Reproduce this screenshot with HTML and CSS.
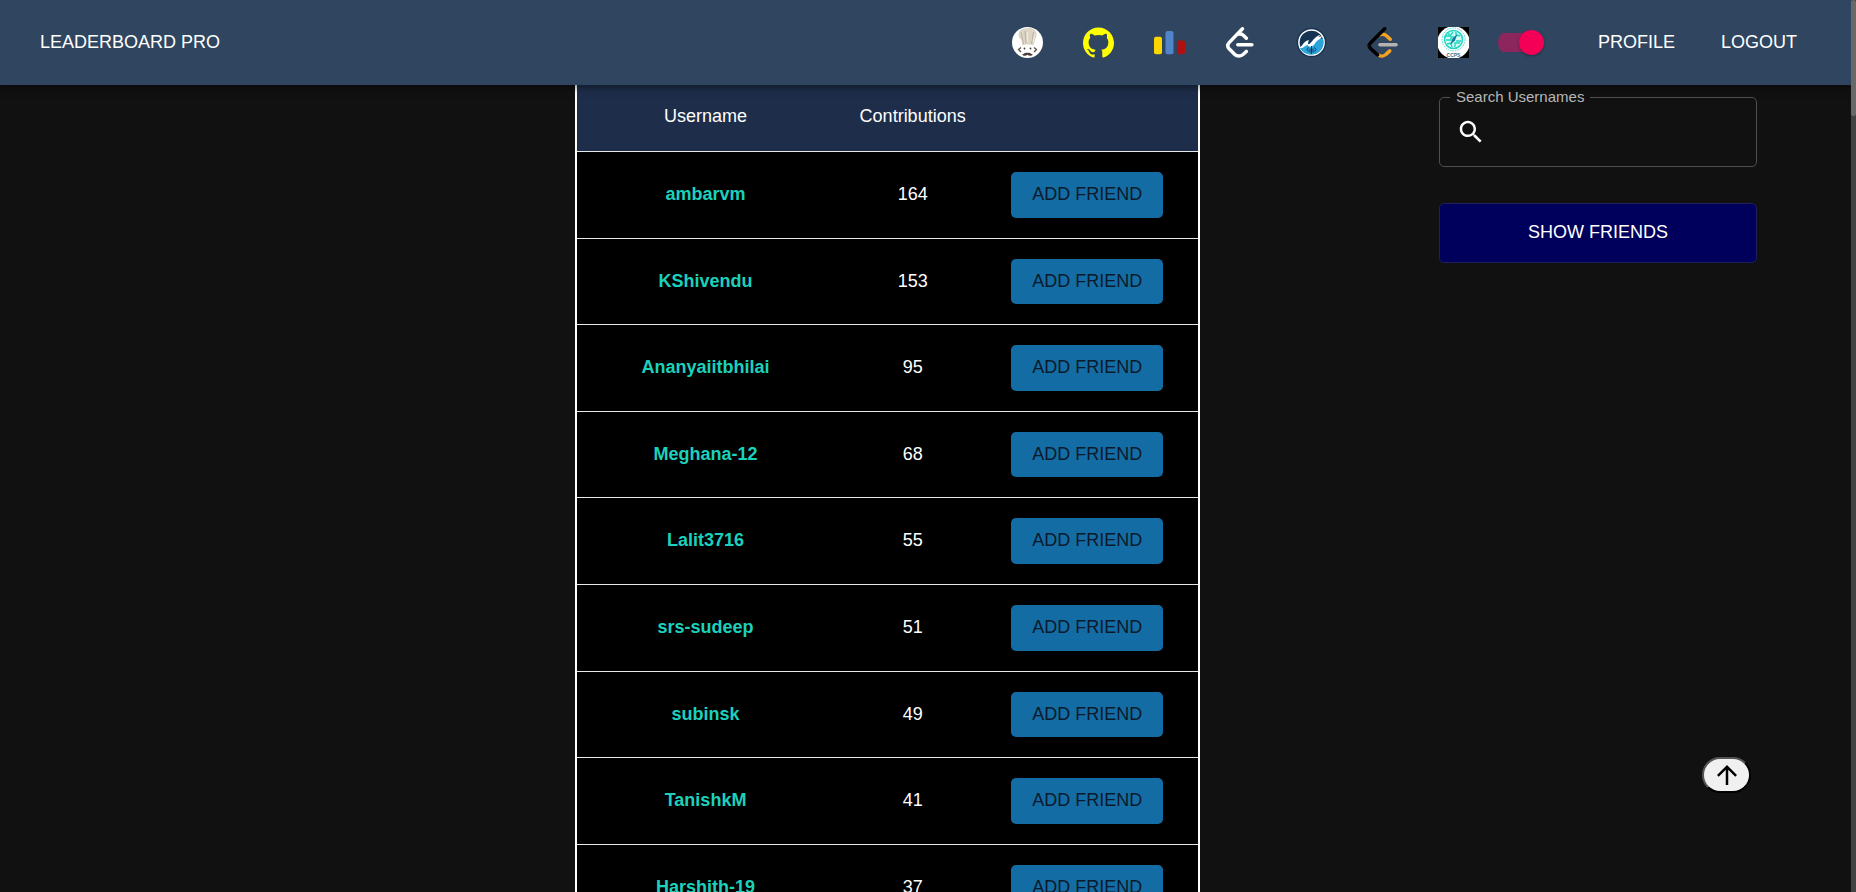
FILE: index.html
```html
<!DOCTYPE html>
<html lang="en">
<head>
<meta charset="utf-8">
<title>Leaderboard Pro</title>
<link rel="stylesheet" href="styles.css">
</head>
<body>
<div class="shell">
  <header class="navbar">
    <a class="nav-link" href="#">LEADERBOARD PRO</a>
    <nav class="nav-right">
      <div class="platforms">
        <a href="#codechef" aria-label="CodeChef">
          <svg class="icon" viewBox="0 0 31 31">
            <circle cx="15.500" cy="15.500" r="15.500" fill="#fff"/>
            <path d="M10.500 18.500 9.500 13C6 11 5.500 6 8 3.500 10 1.500 13 2 14 1.500c3-1 6-.5 8 1 3 2 3.500 6 1.500 9L21.500 18.500c-3-1.300-8-1.300-11 0z" fill="#ddd6c6"/>
            <path d="M11.500 17 9 5M14 16 13 4M19.500 17l2-12" stroke="#bdb29c" stroke-width="1" fill="none"/>
            <path d="M15.500 15V5M21 15l2-8" stroke="#f2eee4" stroke-width="1" fill="none"/>
            <path d="M9 20.500l-2.500 2L9 25M22 20.500l2.500 2L22 25" stroke="#59504a" stroke-width="1.300" fill="none"/>
            <circle cx="12.500" cy="21.500" r=".9" fill="#463c38"/><circle cx="18.500" cy="21.500" r=".9" fill="#463c38"/>
            <path d="M10 27.500c1.500.2 3-2.500 5.500-1.500 2.500-1 4 1.700 5.500 1.500-1.500 1.800-4 1.500-5.500.3-1.500 1.200-4 1.500-5.500-.3z" fill="#463c38"/>
          </svg>
        </a>
        <a href="#github" aria-label="GitHub">
          <svg class="icon" viewBox="0 0 24 24">
            <path fill="#ff0" d="M12 .297c-6.630 0-12 5.373-12 12 0 5.303 3.438 9.800 8.205 11.385.6.113.82-.258.82-.577 0-.285-.01-1.040-.015-2.040-3.338.724-4.042-1.610-4.042-1.610C4.422 18.070 3.633 17.700 3.633 17.700c-1.087-.744.084-.729.084-.729 1.205.084 1.838 1.236 1.838 1.236 1.070 1.835 2.809 1.305 3.495.998.108-.776.417-1.305.76-1.605-2.665-.3-5.466-1.332-5.466-5.930 0-1.310.465-2.380 1.235-3.220-.135-.303-.54-1.523.105-3.176 0 0 1.005-.322 3.300 1.230.96-.267 1.980-.399 3-.405 1.020.006 2.040.138 3 .405 2.280-1.552 3.285-1.230 3.285-1.230.645 1.653.24 2.873.12 3.176.765.840 1.230 1.910 1.230 3.220 0 4.610-2.805 5.625-5.475 5.920.42.360.81 1.096.81 2.220 0 1.606-.015 2.896-.015 3.286 0 .315.210.690.825.570C20.565 22.092 24 17.592 24 12.297c0-6.627-5.373-12-12-12"/>
          </svg>
        </a>
        <a href="#codeforces" aria-label="Codeforces">
          <svg class="icon" viewBox="0 0 24 24">
            <rect x="0" y="7.500" width="6.200" height="13.500" rx="1.500" fill="#ffd500"/>
            <rect x="8.900" y="3" width="6.200" height="18" rx="1.500" fill="#5185c9"/>
            <rect x="17.800" y="10.500" width="6.200" height="10.500" rx="1.500" fill="#b01010"/>
          </svg>
        </a>
        <a href="#leetcode-contests" aria-label="LeetCode contests">
          <svg class="icon" viewBox="0 0 24 24" fill="none" stroke="#fff" stroke-width="2.700" stroke-linecap="round" stroke-linejoin="round">
            <path d="M13.500 1.400 3.200 12.100c-1.300 1.400-1.300 3.300 0 4.700l4.200 4.300c1.700 1.700 4.900 1.900 6.700.1l2.400-2.300M9.500 5.700c1.800-.7 3.400-.5 4.900.9l2.100 2.100M9.900 13.700h10.900"/>
          </svg>
        </a>
        <a href="#openlake" aria-label="OpenLake">
          <svg class="icon" viewBox="0 0 31 31">
            <circle cx="15.500" cy="15.500" r="14.800" fill="#173454"/>
            <circle cx="15.500" cy="15.500" r="12.600" fill="#163451" stroke="#fff" stroke-width="1.500"/>
            <path d="M4 21c3-2 5-6 9-7-2 3 0 5 2 3 3-4 6-6 12-5.500C29 18 25 27.500 15.500 27.500 10 27.500 6 25 4 21z" fill="#29a5dc"/>
            <path d="M3.500 21c3-2 5-8 9.500-7.700-2 3-1 5.200 1 3.200C18 12 20 9 25 7.500L22.500 10l4-1-2.500 3 3.500-.5c-5 .2-7 2.500-9 5.500-2 3-6 4-7 .5-2 1-4 4-8 3.500z" fill="#fff"/>
            <path d="M15.500 19v8M12.500 20.500l-1.500 2 1.500 2M18.500 20.500l1.500 2-1.500 2M14 21.500v4M17 21.500v4" fill="none" stroke="#173454" stroke-width="1"/>
          </svg>
        </a>
        <a href="#leetcode" aria-label="LeetCode">
          <svg class="icon" viewBox="0 0 24 24" fill="none" stroke-width="2.700" stroke-linecap="round" stroke-linejoin="round">
            <path stroke="#f5a121" d="M10.300 5.900c1.800-.7 3.400-.4 4.900 1l2.800 2.600"/>
            <path stroke="#f5a121" d="M8.700 21.600c1.800 1.300 4.600 1 6.200-.6l2.700-2.500"/>
            <path stroke="#b3b3b3" d="M10 13.700h12.500"/>
            <path stroke="#000" d="M13.700 1.400 2.700 12.300c-1.300 1.300-1.300 2.900 0 4.300l5.500 5"/>
          </svg>
        </a>
        <a href="#ccps" aria-label="CCPS">
          <svg class="icon" viewBox="0 0 31 31">
            <path fill="#000" d="M0 0h31v31H0z"/>
            <circle cx="15.500" cy="15.500" r="16.300" fill="#fff"/>
            <circle cx="15.500" cy="12.500" r="11.500" fill="none" stroke="#4bd5ce" stroke-width="1" stroke-dasharray="1.500 1"/>
            <circle cx="15.500" cy="12.500" r="9" fill="#d5faf3" stroke="#20d8c4" stroke-width="1.500"/>
            <path d="M8 9h4l3-4M8 13h5v-3h4M9 17l4-1 1 4M17 20v-4h5M18 14h5M18 5v3l4 1M11 6v3" fill="none" stroke="#20d8c4" stroke-width="1.400"/>
            <path d="M19.500 7 17 13.500 12 18l2.500-6.500z" fill="#167c9d"/>
            <text x="15.500" y="30" text-anchor="middle" class="ccps-text">CCPS</text>
          </svg>
        </a>
      </div>
      <input class="switch" type="checkbox" role="switch" aria-label="Dark mode" checked>
      <div class="account">
        <a class="nav-link" href="#profile">PROFILE</a>
        <a class="nav-link" href="#logout">LOGOUT</a>
      </div>
    </nav>
  </header>

  <main class="content">
    <table class="board">
      <thead>
        <tr><th class="col-user">Username</th><th class="col-count">Contributions</th><th class="col-action"></th></tr>
      </thead>
      <tbody>
        <tr><td><a class="user" href="#">ambarvm</a></td><td>164</td><td><button class="add">ADD FRIEND</button></td></tr>
        <tr><td><a class="user" href="#">KShivendu</a></td><td>153</td><td><button class="add">ADD FRIEND</button></td></tr>
        <tr><td><a class="user" href="#">Ananyaiitbhilai</a></td><td>95</td><td><button class="add">ADD FRIEND</button></td></tr>
        <tr><td><a class="user" href="#">Meghana-12</a></td><td>68</td><td><button class="add">ADD FRIEND</button></td></tr>
        <tr><td><a class="user" href="#">Lalit3716</a></td><td>55</td><td><button class="add">ADD FRIEND</button></td></tr>
        <tr><td><a class="user" href="#">srs-sudeep</a></td><td>51</td><td><button class="add">ADD FRIEND</button></td></tr>
        <tr><td><a class="user" href="#">subinsk</a></td><td>49</td><td><button class="add">ADD FRIEND</button></td></tr>
        <tr><td><a class="user" href="#">TanishkM</a></td><td>41</td><td><button class="add">ADD FRIEND</button></td></tr>
        <tr><td><a class="user" href="#">Harshith-19</a></td><td>37</td><td><button class="add">ADD FRIEND</button></td></tr>
      </tbody>
    </table>

    <aside class="panel">
      <fieldset class="search">
        <legend><label for="search">Search Usernames</label></legend>
        <svg class="search-icon" viewBox="0 0 24 24"><path fill="#fff" d="M15.500 14h-.79l-.28-.27C15.410 12.590 16 11.110 16 9.500 16 5.910 13.090 3 9.500 3S3 5.910 3 9.500 5.910 16 9.500 16c1.610 0 3.090-.59 4.230-1.570l.27.28v.79l5 4.990L20.490 19l-4.990-5zm-6 0C7.010 14 5 11.990 5 9.500S7.010 5 9.500 5 14 7.010 14 9.500 11.990 14 9.500 14z"/></svg>
        <input id="search" type="text">
      </fieldset>
      <button class="friends">SHOW FRIENDS</button>
    </aside>
  </main>
</div>

<button class="to-top" aria-label="Back to top">
  <svg viewBox="0 0 24 24"><path d="M4 12l1.410 1.410L11 7.830V20h2V7.830l5.580 5.590L20 12l-8-8-8 8z"/></svg>
</button>
<div class="scroll-track"><div class="scroll-thumb"></div></div>
</body>
</html>
```

FILE: styles.css
```css
* {
  box-sizing: border-box;
}

body {
  margin: 0;
  padding-right: 5px;
  background: #111;
  color: #fff;
  font: 18px/1.2 "Liberation Sans", Arial, sans-serif;
}

button,
input {
  font: inherit;
}

a {
  color: inherit;
  text-decoration: none;
}

.shell {
  height: 100vh;
  display: flex;
  flex-direction: column;
  overflow: hidden;
}

/* Top bar */
.navbar {
  z-index: 1;
  flex: none;
  display: flex;
  justify-content: space-between;
  align-items: center;
  padding: 27px 54px 27px 40px;
  background: #2f4560;
  box-shadow: 0 2px 8px rgba(0, 0, 0, 0.5);
}

.nav-right,
.platforms,
.account {
  display: flex;
  align-items: center;
}

.platforms {
  gap: 40px;
}

.platforms a {
  display: flex;
}

.icon {
  width: 31px;
  height: 31px;
}

.ccps-text {
  font: bold 5px "Liberation Sans", Arial, sans-serif;
  fill: #48708c;
}

.switch {
  appearance: none;
  display: flex;
  align-items: center;
  justify-content: flex-end;
  width: 46px;
  height: 25px;
  margin: 0 54px 0 29px;
  background: linear-gradient(#8d265d, #8d265d) left center / 41px 19px no-repeat;
  border-radius: 13px;
}

.switch::before {
  content: "";
  width: 25px;
  height: 25px;
  border-radius: 50%;
  background: #f50057;
  box-shadow: 0 1px 3px rgba(0, 0, 0, 0.3);
}

.account {
  gap: 46px;
}

/* Page body */
.content {
  display: grid;
  grid-template-columns: 575fr 625fr 239fr 318fr 94fr;
  align-items: start;
}

.board {
  grid-column: 2;
  width: 100%;
  table-layout: fixed;
  border-spacing: 0;
  border: solid #fff;
  border-width: 0 2px;
  background: #000;
  text-align: center;
}

.board th {
  padding: 20px 0 24px;
  background: #1e2e4a;
  border-bottom: 1px solid #e8e8e8;
  font-weight: normal;
  line-height: 22px;
}

.board td {
  padding: 20px 0;
  border-bottom: 1px solid #e8e8e8;
}

.board td:last-child {
  padding-left: 20px;
  text-align: left;
}

.col-user {
  width: 41.4%;
}

.col-count {
  width: 25.3%;
}

.user {
  color: #1cd1bc;
  font-weight: bold;
}

.add {
  display: block;
  padding: 12px 21px;
  border: 0;
  border-radius: 5px;
  background: #146ca4;
  color: #0b1a2b;
}

/* Side panel */
.panel {
  grid-column: 4;
  display: grid;
  gap: 36px;
  padding-top: 3px;
}

.search {
  display: flex;
  align-items: center;
  min-width: 0;
  height: 79px;
  margin: 0;
  padding: 0 16px 8px;
  border: 1px solid #505050;
  border-radius: 5px;
}

.search legend {
  margin-left: -6px;
  padding: 0 6px;
  color: #b8b8b8;
  font-size: 15px;
  line-height: 18px;
}

.search-icon {
  flex: none;
  width: 30px;
  height: 30px;
}

.search input {
  flex: 1;
  min-width: 0;
  height: 48px;
  border: 0;
  outline: 0;
  background: transparent;
  color: #fff;
}

.friends {
  height: 60px;
  border: 1px solid #1f1f5e;
  border-radius: 5px;
  background: #00005c;
  color: #fff;
}

/* Floating button and scroll bar */
.to-top {
  position: fixed;
  right: 105px;
  bottom: 99px;
  display: flex;
  align-items: center;
  justify-content: center;
  width: 49px;
  height: 36px;
  padding: 0;
  border: 2px outset #000;
  border-radius: 20px;
  background: #f0f0f0;
}

.to-top svg {
  width: 30px;
  height: 30px;
}

.scroll-track {
  position: fixed;
  z-index: 2;
  top: 0;
  right: 0;
  bottom: 0;
  width: 5px;
  background: #424242;
}

.scroll-thumb {
  height: 13vh;
  border-radius: 5px;
  background: #686868;
}
```
